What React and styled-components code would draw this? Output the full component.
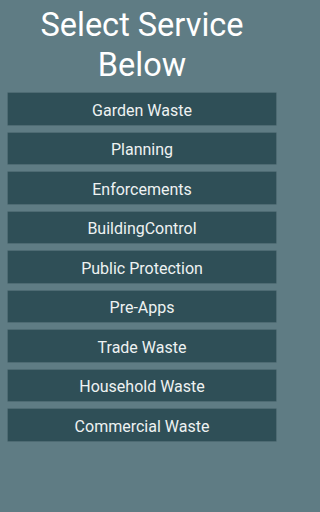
import React from "react";
import styled, { createGlobalStyle } from "styled-components";

const Global = createGlobalStyle`
  html, body { margin: 0; padding: 0; background: #5f7c84; }
  body { font-family: Roboto, "Noto Sans", sans-serif; }
`;

const Page = styled.div`
  width: 284px;
  min-height: 512px;
  box-sizing: border-box;
  padding: 5px 8px 0;
  background: #5f7c84;
  display: flex;
  flex-direction: column;
`;

const Title = styled.h1`
  margin: 0 0 8px;
  font-family: Roboto, sans-serif;
  font-weight: 400;
  font-size: 32.5px;
  line-height: 40px;
  color: #ffffff;
  text-align: center;
`;

const List = styled.div`
  display: flex;
  flex-direction: column;
  gap: 8px;
`;

const ServiceButton = styled.button`
  height: 31.5px;
  width: 100%;
  box-sizing: border-box;
  border: none;
  background: #2f4f57;
  box-shadow: 0 0 0 0.5px rgba(40, 70, 78, 0.6);
  color: #eef2f2;
  font-family: Roboto, sans-serif;
  font-size: 16px;
  padding: 3px 0 0;
  display: flex;
  align-items: center;
  justify-content: center;
`;

const services = [
  "Garden Waste",
  "Planning",
  "Enforcements",
  "BuildingControl",
  "Public Protection",
  "Pre-Apps",
  "Trade Waste",
  "Household Waste",
  "Commercial Waste",
];

export default function App() {
  return (
    <>
      <Global />
      <Page>
        <Title>
          Select Service
          <br />
          Below
        </Title>
        <List>
          {services.map((s) => (
            <ServiceButton key={s}>{s}</ServiceButton>
          ))}
        </List>
      </Page>
    </>
  );
}
